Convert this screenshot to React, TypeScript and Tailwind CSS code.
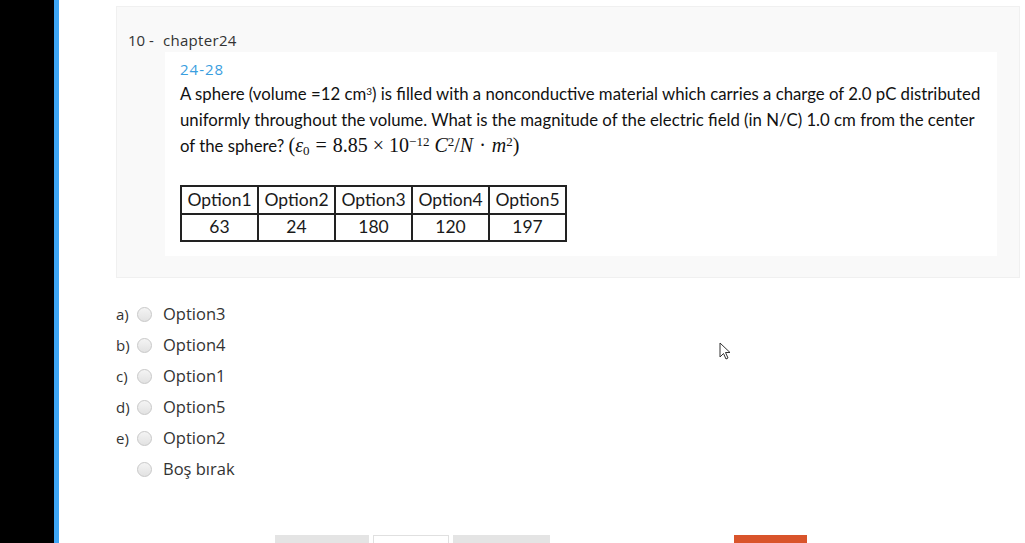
import React from "react";

const options = [
  { label: "a)", text: "Option3" },
  { label: "b)", text: "Option4" },
  { label: "c)", text: "Option1" },
  { label: "d)", text: "Option5" },
  { label: "e)", text: "Option2" },
  { label: "", text: "Boş bırak" },
];

const table = [
  ["Option1", "Option2", "Option3", "Option4", "Option5"],
  ["63", "24", "180", "120", "197"],
];

export default function App() {
  return (
    <div className="flex h-[543px] w-[1025px] overflow-hidden bg-white" style={{ fontFamily: '"Open Sans", sans-serif' }}>
      {/* left rail */}
      <div className="w-[54px] shrink-0 bg-black" />
      <div className="w-[5px] shrink-0 bg-[#3ea6f5]" />

      <div className="relative flex-1 pl-[57px] pr-[5px] pt-[6px]">
        {/* question card */}
        <div className="border border-[#f0f0f0] bg-[#f9f9f9] pb-[21px] pl-[11px] pr-[22px] pt-[22px]">
          <div className="flex text-[15px] leading-[22px] text-[#333]">
            <span className="w-[35px]">10 -</span>
            <span className="tracking-[0.3px]">chapter24</span>
          </div>
          <div className="ml-[37px] mt-[1px] bg-white pb-[14px] pl-[15px] pt-[6px]">
            <div className="text-[15px] leading-[22px] tracking-[1px] text-[#3a9ee0]">24-28</div>
            <p
              className="mt-[1px] whitespace-nowrap text-[16.75px] leading-[26px] text-[#111]"
              style={{ fontFamily: "Lato, sans-serif" }}
            >
              A sphere (volume =12 cm<sup className="text-[10px]">3</sup>) is filled with a nonconductive material which carries a charge of 2.0 pC distributed
              <br />
              uniformly throughout the volume. What is the magnitude of the electric field (in N/C) 1.0 cm from the center
              <br />
              of the sphere?{" "}
              <span style={{ fontFamily: '"Liberation Serif", serif' }} className="text-[20px] leading-[20px]">
                (<i>ε</i>
                <sub className="text-[13px]">0</sub>
                <span className="mx-[6px]">=</span>8.85<span className="mx-[5px]">×</span>10
                <sup className="text-[13px]">−12</sup> <i>C</i>
                <sup className="text-[13px]">2</sup>/<i>N</i>
                <span className="mx-[6px]">·</span>
                <i>m</i>
                <sup className="text-[13px]">2</sup>)
              </span>
            </p>
            <table
              className="mt-[26px] border-collapse border-2 border-[#222] text-[17.5px] text-[#1a1a1a]"
              style={{ fontFamily: "Lato, sans-serif" }}
            >
              <tbody>
                {table.map((row, i) => (
                  <tr key={i} className="h-[27.5px]">
                    {row.map((c, j) => (
                      <td key={j} className="w-[77px] border-2 border-[#222] px-[2px] text-center leading-[22px]">
                        {c}
                      </td>
                    ))}
                  </tr>
                ))}
              </tbody>
            </table>
          </div>
        </div>

        {/* answers */}
        <div className="mt-[21px] flex flex-col text-[16.5px] text-[#333]">
          {options.map((o) => (
            <div key={o.text} className="flex h-[31px] items-center">
              <span className="w-[20px] text-[15px]">{o.label}</span>
              <span className="ml-[1px] h-[15px] w-[15px] rounded-full border border-[#c8c8c8] bg-gradient-to-b from-[#f4f4f4] to-[#e2e2e2]" />
              <span className="ml-[11px]">{o.text}</span>
            </div>
          ))}
        </div>

        {/* bottom buttons */}
        <div className="mt-[50px] flex">
          <div className="ml-[159px] h-[20px] w-[94px] bg-[#e4e4e4]" />
          <div className="ml-[4px] h-[20px] w-[76px] border border-[#e0e0e0] bg-white" />
          <div className="ml-[4px] h-[20px] w-[97px] bg-[#e4e4e4]" />
          <div className="ml-[184px] h-[20px] w-[73px] bg-[#d9542b]" />
        </div>

        {/* mouse pointer */}
        <svg className="absolute left-[660px] top-[342px]" width="14" height="20" viewBox="0 0 14 20">
          <path d="M1 1 L1 15 L4.5 11.5 L7 17 L9 16 L6.5 10.5 L11 10.5 Z" fill="white" stroke="#333" strokeWidth="1" />
        </svg>
      </div>
    </div>
  );
}
